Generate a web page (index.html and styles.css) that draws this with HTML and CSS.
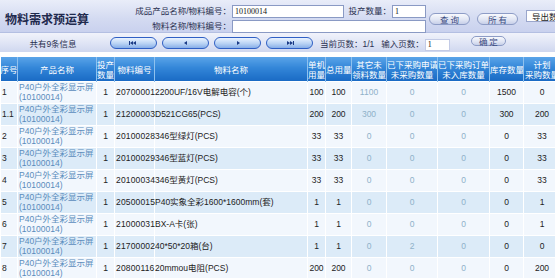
FILE: index.html
```html
<!DOCTYPE html>
<html lang="zh-CN">
<head>
    <meta charset="UTF-8">
    <title>物料需求预运算</title>
    <link rel="stylesheet" href="styles.css">
</head>
<body>

<div class="top">
    <h1 class="title">物料需求预运算</h1>
    <div class="query">
        <label class="q-label">成品产品名称/物料编号：</label>
        <input class="q-input" type="text" value="10100014">
        <label class="q-label">投产数量：</label>
        <input class="q-input" type="text" value="1">
        <label class="q-label">物料名称/物料编号：</label>
        <input class="q-input q-wide" type="text">
    </div>
    <div class="actions">
        <button class="btn">查 询</button>
        <button class="btn">所 有</button>
    </div>
    <button class="export">导出数据</button>
</div>

<div class="pager">
    <div class="count">共有9条信息</div>
    <div class="pages">
        <button class="pg"><svg width="9" height="4" viewBox="0 0 9 4"><rect x="0" y="0" width="1" height="4"/><path d="M1 2 4 0v4zM4 2 7 0v4z"/></svg></button>
        <button class="pg"><svg width="4" height="4" viewBox="0 0 4 4"><path d="M0 2 3 0v4z"/></svg></button>
        <button class="pg"><svg width="4" height="4" viewBox="0 0 4 4"><path d="M4 2 1 0v4z"/></svg></button>
        <button class="pg"><svg width="9" height="4" viewBox="0 0 9 4"><path d="M5 2 2 0v4zM8 2 5 0v4z"/><rect x="8" y="0" width="1" height="4"/></svg></button>
    </div>
    <span class="cur">当前页数：1/1</span>
    <span class="goto">输入页数：</span>
    <input class="q-input page-input" type="text" value="1">
    <button class="btn btn-ok">确 定</button>
</div>

<table class="grid">
    <colgroup>
        <col style="width:17px"><col style="width:79px"><col style="width:18px"><col style="width:40px">
        <col style="width:153px"><col style="width:18px"><col style="width:26px"><col style="width:35px">
        <col style="width:51px"><col style="width:52px"><col style="width:34px"><col style="width:37px">
    </colgroup>
    <thead>
        <tr>
            <th>序号</th>
            <th>产品名称</th>
            <th>投产<br>数量</th>
            <th>物料编号</th>
            <th>物料名称</th>
            <th>单机<br>用量</th>
            <th>总用量</th>
            <th>其它未<br>领料数量</th>
            <th>已下采购申请<br>未采购数量</th>
            <th>已下采购订单<br>未入库数量</th>
            <th>库存数量</th>
            <th>计划<br>采购数量</th>
        </tr>
    </thead>
    <tbody>
        <tr>
            <td class="no">1</td><td class="prod"><span>P40户外全彩显示屏</span><span>(10100014)</span></td><td class="c">1</td>
            <td class="code">20700001</td><td class="name">2200UF/16V电解电容(个)</td>
            <td class="c">100</td><td class="c">100</td><td class="c dim">1100</td><td class="c dim">0</td><td class="c dim">0</td><td class="c">1500</td><td class="c">0</td>
        </tr>
        <tr>
            <td class="no">1.1</td><td class="prod"><span>P40户外全彩显示屏</span><span>(10100014)</span></td><td class="c">1</td>
            <td class="code">21200003</td><td class="name">D521CG65(PCS)</td>
            <td class="c">200</td><td class="c">200</td><td class="c dim">300</td><td class="c dim">0</td><td class="c dim">0</td><td class="c">300</td><td class="c">200</td>
        </tr>
        <tr>
            <td class="no">2</td><td class="prod"><span>P40户外全彩显示屏</span><span>(10100014)</span></td><td class="c">1</td>
            <td class="code">20100028</td><td class="name">346型绿灯(PCS)</td>
            <td class="c">33</td><td class="c">33</td><td class="c dim">0</td><td class="c dim">0</td><td class="c dim">0</td><td class="c">0</td><td class="c">33</td>
        </tr>
        <tr>
            <td class="no">3</td><td class="prod"><span>P40户外全彩显示屏</span><span>(10100014)</span></td><td class="c">1</td>
            <td class="code">20100029</td><td class="name">346型蓝灯(PCS)</td>
            <td class="c">33</td><td class="c">33</td><td class="c dim">0</td><td class="c dim">0</td><td class="c dim">0</td><td class="c">0</td><td class="c">33</td>
        </tr>
        <tr>
            <td class="no">4</td><td class="prod"><span>P40户外全彩显示屏</span><span>(10100014)</span></td><td class="c">1</td>
            <td class="code">20100034</td><td class="name">346型黄灯(PCS)</td>
            <td class="c">33</td><td class="c">33</td><td class="c dim">0</td><td class="c dim">0</td><td class="c dim">0</td><td class="c">0</td><td class="c">33</td>
        </tr>
        <tr>
            <td class="no">5</td><td class="prod"><span>P40户外全彩显示屏</span><span>(10100014)</span></td><td class="c">1</td>
            <td class="code">20500015</td><td class="name">P40实象全彩1600*1600mm(套)</td>
            <td class="c">1</td><td class="c">1</td><td class="c dim">0</td><td class="c dim">0</td><td class="c dim">0</td><td class="c">0</td><td class="c">1</td>
        </tr>
        <tr>
            <td class="no">6</td><td class="prod"><span>P40户外全彩显示屏</span><span>(10100014)</span></td><td class="c">1</td>
            <td class="code">21000031</td><td class="name">BX-A卡(张)</td>
            <td class="c">1</td><td class="c">1</td><td class="c dim">0</td><td class="c dim">0</td><td class="c dim">0</td><td class="c">0</td><td class="c">1</td>
        </tr>
        <tr>
            <td class="no">7</td><td class="prod"><span>P40户外全彩显示屏</span><span>(10100014)</span></td><td class="c">1</td>
            <td class="code">21700002</td><td class="name">40*50*20箱(台)</td>
            <td class="c">1</td><td class="c">1</td><td class="c dim">0</td><td class="c dim">2</td><td class="c dim">0</td><td class="c">0</td><td class="c">0</td>
        </tr>
        <tr>
            <td class="no">8</td><td class="prod"><span>P40户外全彩显示屏</span><span>(10100014)</span></td><td class="c">1</td>
            <td class="code">20800116</td><td class="name">20mmou电阻(PCS)</td>
            <td class="c">200</td><td class="c">200</td><td class="c dim">0</td><td class="c dim">0</td><td class="c dim">0</td><td class="c">0</td><td class="c">200</td>
        </tr>
    </tbody>
</table>

</body>
</html>
```

FILE: styles.css
```css
* {
    margin: 0;
    padding: 0;
    box-sizing: border-box;
}
html, body {
    overflow: hidden;
}
body {
    width: 555px;
    font-family: "Liberation Sans", "Noto Sans CJK SC", sans-serif;
    font-size: 8.5px;
    color: #222;
    background-color: #fff;
}
.top {
    display: flex;
    height: 33px;
    background: linear-gradient(#e9edf9, #d3daf1 60%, #c9d1ee);
    border-bottom: 1px solid #b4bfe2;
}
.title {
    flex: 0 0 133px;
    padding: 10px 0 0 5px;
    font-size: 12px;
    font-weight: bold;
    color: #1f2a4e;
    white-space: nowrap;
}
.query {
    display: grid;
    grid-template-columns: 99px 112px 48px 34px;
    grid-template-rows: 13px 13px;
    row-gap: 2px;
    padding-top: 5px;
}
.q-label {
    text-align: right;
    line-height: 13px;
    color: #2a3050;
    padding-right: 1px;
    white-space: nowrap;
}
.q-input {
    height: 13px;
    border: 1px solid #8a9ac4;
    background-color: #fff;
    font-family: "Liberation Serif", "Noto Sans CJK SC", serif;
    font-size: 8px;
    padding: 0 2px;
    color: #111;
    outline: none;
}
.q-wide {
    grid-column: 2 / 5;
}
.actions {
    display: flex;
    gap: 7px;
    margin: 13px 0 0 3px;
}
.btn {
    width: 41px;
    height: 12px;
    border: 1px solid #8d9cc6;
    border-radius: 7px;
    background: linear-gradient(#f8f9fd, #dfe4f3 60%, #c7cfe8);
    font-family: "Noto Sans CJK SC", sans-serif;
    font-size: 8.5px;
    line-height: 10px;
    color: #3a4a80;
}
.export {
    flex: 0 0 45px;
    height: 12px;
    margin: 10px 0 0 8px;
    border: 1px solid #9aa6cc;
    background-color: #fff;
    font-family: "Noto Sans CJK SC", sans-serif;
    font-size: 8.5px;
    line-height: 10px;
    text-align: left;
    padding-left: 5px;
    color: #222;
    white-space: nowrap;
    overflow: hidden;
}
.pager {
    display: flex;
    align-items: center;
    height: 19px;
    background: linear-gradient(#f1f3fb, #dfe4f5 55%, #cfd7ef);
    color: #2a3050;
}
.count {
    flex: 0 0 110px;
    text-align: center;
    padding-right: 4px;
}
.pages {
    display: flex;
    gap: 5px;
}
.pg {
    display: flex;
    align-items: center;
    justify-content: center;
    width: 47px;
    height: 12px;
    border: 1px solid #2f5fc4;
    border-radius: 6px;
    background: linear-gradient(#eaf3ff, #b9d3f4 55%, #87aee8);
    fill: #1b3b86;
}
.cur {
    margin-left: 7px;
}
.goto {
    margin-left: 7px;
}
.page-input {
    width: 25px;
    height: 12px;
    margin: 4px 0 0 1px;
    border-color: #c3cbe6;
}
.btn-ok {
    width: 35px;
    height: 10px;
    margin: 0 0 3px 21px;
    line-height: 8px;
}
.grid {
    width: 560px;
    margin-top: 5px;
    table-layout: fixed;
    border-collapse: collapse;
}
.grid th {
    height: 24px;
    padding: 0;
    background: linear-gradient(#5aa4e8, #3386d8 45%, #1a6ac4);
    color: #fff;
    font-family: "Noto Sans CJK SC", sans-serif;
    font-weight: normal;
    font-size: 8.5px;
    line-height: 10px;
    border-right: 1px solid #8fc1ee;
    white-space: nowrap;
    overflow: hidden;
}
.grid td {
    height: 22px;
    padding: 0 1px;
    line-height: 10px;
    border: 1px solid #fff;
    white-space: nowrap;
}
.grid tbody tr:nth-child(odd) td {
    background-color: #f2f7fd;
}
.grid tbody tr:nth-child(even) td {
    background-color: #dcebf8;
}
.no {
    padding-left: 2px;
}
.prod {
    color: #5a8cbc;
    overflow: hidden;
}
.prod span {
    display: block;
    height: 10px;
}
.code {
    letter-spacing: 0.15px;
}
.grid td.name {
    padding-left: 0;
}
.c {
    text-align: center;
}
.dim {
    color: #8fb1c9;
}
```
